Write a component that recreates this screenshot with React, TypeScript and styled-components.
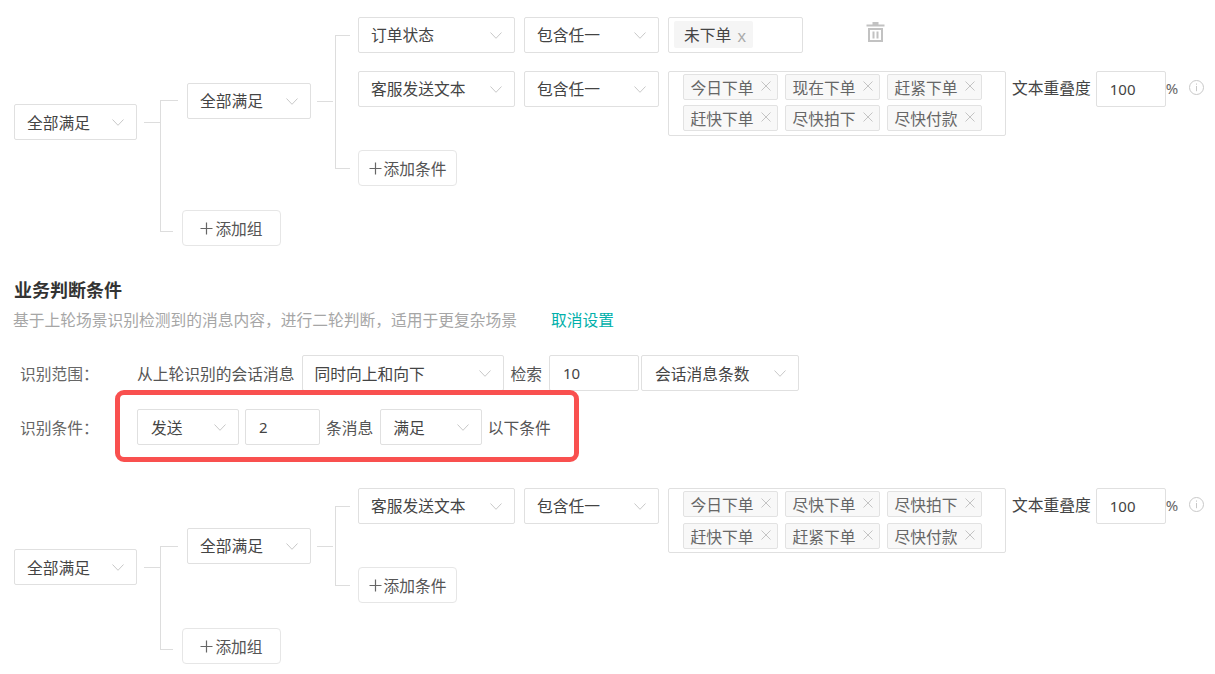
import React from "react";
import styled, { createGlobalStyle } from "styled-components";

const Global = createGlobalStyle`
  html, body { margin: 0; padding: 0; background: #fff; }
  body { font-family: "Noto Sans", "Noto Sans CJK SC", sans-serif; font-size: 15.75px; color: #444; overflow: hidden; }
  * { box-sizing: border-box; }
`;

const Page = styled.div`
  width: 1215px;
  height: 674px;
  padding: 17px 0 0 14px;
  position: relative;
`;
const Tree = styled.div`
  display: flex;
  align-items: stretch;
`;
const RootCell = styled.div<{ $top: number }>`
  display: flex;
  align-items: center;
  align-self: flex-start;
  margin-top: ${(p) => p.$top}px;
`;
const Stub = styled.div<{ $ml: number; $w: number }>`
  width: ${(p) => p.$w}px;
  height: 1px;
  margin-left: ${(p) => p.$ml}px;
  background: #ddd;
`;
const Bracket = styled.div<{ $mt: number; $mb: number; $ml?: number }>`
  display: flex;
  flex-direction: column;
  flex: none;
  width: 18px;
  margin: ${(p) => p.$mt}px 0 ${(p) => p.$mb}px ${(p) => p.$ml ?? 0}px;
`;
const BracketTop = styled.div<{ $w: number }>`
  flex: 1;
  width: ${(p) => p.$w}px;
  border-left: 1px solid #ddd;
  border-top: 1px solid #ddd;
`;
const BracketBottom = styled.div<{ $w: number }>`
  flex: 1;
  width: ${(p) => p.$w}px;
  border-left: 1px solid #ddd;
  border-bottom: 1px solid #ddd;
`;
const GroupColumn = styled.div`
  display: flex;
  flex-direction: column;
  align-items: flex-start;
  margin-left: 4px;
`;
const InnerGroup = styled.div`
  display: flex;
  align-items: stretch;
  margin-left: 5px;
`;
const FieldColumn = styled.div`
  display: flex;
  flex-direction: column;
  align-items: flex-start;
  margin-left: 5px;
`;
const FieldRow = styled.div<{ $mb?: number }>`
  display: flex;
  align-items: flex-start;
  gap: 9px;
  margin-bottom: ${(p) => p.$mb ?? 0}px;
`;
const SelectBox = styled.div<{ $w: number; $ml?: number; $pl?: number }>`
  width: ${(p) => p.$w}px;
  height: 36px;
  flex: none;
  display: flex;
  align-items: center;
  justify-content: space-between;
  padding: 0 12px 0 ${(p) => p.$pl ?? 12}px;
  margin-left: ${(p) => p.$ml ?? 0}px;
  border: 1px solid #e0e0e0;
  border-radius: 2px;
  background: #fff;
  color: #444;
  white-space: nowrap;
`;
const SelectText = styled.span<{ $dy?: number }>`
  margin-top: ${(p) => (p.$dy ?? 0) * 2}px;
`;
const Arrow = styled.svg`
  width: 12px;
  height: 7px;
  flex: none;
  color: #c8c8c8;
`;
const AddButton = styled.div<{ $mt?: number }>`
  width: 99px;
  height: 36px;
  margin-top: ${(p) => p.$mt ?? 0}px;
  display: flex;
  align-items: center;
  justify-content: center;
  gap: 2px;
  border: 1px solid #e6e6e6;
  border-radius: 4px;
  color: #555;
  white-space: nowrap;
  background: #fff;
`;
const PlusIcon = styled.svg`
  width: 13px;
  height: 13px;
  flex: none;
  color: #666;
`;
const ValueBox = styled.div<{ $w: number }>`
  width: ${(p) => p.$w}px;
  min-height: 36px;
  flex: none;
  border: 1px solid #e0e0e0;
  border-radius: 2px;
  background: #fff;
`;
const SingleValue = styled(ValueBox)`
  padding: 3px 5px;
`;
const TagValue = styled(ValueBox)<{ $rowGap: number }>`
  height: 65px;
  padding: 2px 14px 0;
  display: flex;
  flex-wrap: wrap;
  align-content: flex-start;
  column-gap: 7px;
  row-gap: ${(p) => p.$rowGap}px;
`;
const Tag = styled.div`
  height: 26px;
  width: 95px;
  padding: 0 6px 0 6.5px;
  display: flex;
  align-items: center;
  justify-content: space-between;
  border: 1px solid #e2e2e2;
  border-radius: 2px;
  background: #f8f8f8;
  color: #666;
  white-space: nowrap;
`;
const PlainTag = styled.div`
  height: 27px;
  width: 79px;
  padding: 0 7px 0 10px;
  display: flex;
  align-items: center;
  justify-content: space-between;
  border-radius: 2px;
  background: #f5f5f5;
  color: #444;
  white-space: nowrap;
`;
const PlainX = styled.span`
  font-family: "Liberation Sans", sans-serif;
  font-size: 17px;
  color: #aaa;
  margin-top: 5px;
`;
const Close = styled.svg`
  width: 10px;
  height: 10px;
  flex: none;
  color: #c4c4c4;
  margin-top: -3px;
`;
const TrashIcon = styled.svg`
  width: 19px;
  height: 20px;
  flex: none;
  margin: 5px 0 0 54px;
  color: #c2c2c2;
`;
const OverlapLabel = styled.span`
  margin-left: -3px;
  line-height: 34px;
  white-space: nowrap;
`;
const NumberBox = styled.div<{ $w: number; $ml?: number; $pl?: number }>`
  width: ${(p) => p.$w}px;
  height: 36px;
  flex: none;
  display: flex;
  align-items: center;
  padding-left: ${(p) => p.$pl ?? 13}px;
  margin-left: ${(p) => p.$ml ?? 0}px;
  border: 1px solid #e0e0e0;
  border-radius: 2px;
  color: #444;
  font-size: 15px;
`;
const Percent = styled.span`
  margin-left: -9px;
  line-height: 34px;
  font-size: 15px;
  color: #666;
`;
const InfoIcon = styled.svg`
  width: 15px;
  height: 15px;
  flex: none;
  margin: 9px 0 0 2px;
  color: #c8c8c8;
`;
const Title = styled.div`
  margin-top: 32px;
  height: 24px;
  line-height: 24px;
  font-size: 18px;
  font-weight: 700;
  color: #333;
`;
const Description = styled.div`
  margin: 6px 0 0 -1px;
  height: 24px;
  line-height: 24px;
  color: #a6a6a6;
  white-space: nowrap;
`;
const CancelLink = styled.span`
  margin-left: 34px;
  color: #00b0aa;
`;
const ConditionBlock = styled.div`
  margin-top: 23px;
  position: relative;
`;
const FormRow = styled.div<{ $mt?: number }>`
  display: flex;
  align-items: center;
  height: 36px;
  margin-top: ${(p) => p.$mt ?? 0}px;
  padding-left: 6px;
`;
const RowLabel = styled.span`
  width: 117px;
  flex: none;
  color: #666;
  white-space: nowrap;
`;
const InlineText = styled.span<{ $ml?: number; $mr?: number }>`
  margin-left: ${(p) => p.$ml ?? 0}px;
  margin-right: ${(p) => p.$mr ?? 0}px;
  color: #555;
  white-space: nowrap;
`;
const Highlight = styled.div`
  position: absolute;
  left: 101px;
  top: 35px;
  width: 464px;
  height: 72px;
  border: 5px solid #f9504f;
  border-radius: 9px;
  pointer-events: none;
`;
const LowerTree = styled(Tree)`
  margin-top: 43px;
`;

const Chevron = () => (
  <Arrow viewBox="0 0 12 7" fill="none">
    <path d="M0.5 0.5L6 6.300L11.500 0.500" stroke="currentColor" strokeWidth="1" />
  </Arrow>
);
const Select = ({
  w,
  ml,
  pl,
  dy,
  children,
}: {
  w: number;
  ml?: number;
  pl?: number;
  dy?: number;
  children: React.ReactNode;
}) => (
  <SelectBox $w={w} $ml={ml} $pl={pl}>
    <SelectText $dy={dy}>{children}</SelectText>
    <Chevron />
  </SelectBox>
);
const Add = ({ mt, children }: { mt?: number; children: React.ReactNode }) => (
  <AddButton $mt={mt}>
    <PlusIcon viewBox="0 0 13 13" fill="none">
      <path d="M6.5 0.5v12M0.5 6.5h12" stroke="currentColor" strokeWidth="1.2" />
    </PlusIcon>
    {children}
  </AddButton>
);
const TagItem = ({ children }: { children: React.ReactNode }) => (
  <Tag>
    {children}
    <Close viewBox="0 0 10 10" fill="none">
      <path d="M0.5 0.5l9 9M9.5 0.5l-9 9" stroke="currentColor" strokeWidth="1" />
    </Close>
  </Tag>
);
const Overlap = () => (
  <>
    <OverlapLabel>文本重叠度</OverlapLabel>
    <NumberBox $w={70} $ml={-4}>100</NumberBox>
    <Percent>%</Percent>
    <InfoIcon viewBox="0 0 15 15" fill="none">
      <circle cx="7.5" cy="7.5" r="7" stroke="currentColor" />
      <path d="M7.5 3.5v1.2M7.5 6v5.2" stroke="currentColor" />
    </InfoIcon>
  </>
);

function ConditionTree(props: {
  rootTop: number;
  groupTop: number;
  groupCenter: number;
  rootDy: number;
  groupDy: number;
  children: React.ReactNode;
  addMt: number;
  addMargin: number;
  As: typeof Tree;
}) {
  const { As } = props;
  return (
    <As>
      <RootCell $top={props.rootTop}>
        <Select w={123} dy={props.rootDy}>全部满足</Select>
        <Stub $ml={7} $w={16} />
      </RootCell>
      <Bracket $mt={props.groupCenter} $mb={14}>
        <BracketTop $w={18} />
        <BracketBottom $w={13} />
      </Bracket>
      <GroupColumn>
        <InnerGroup>
          <RootCell $top={props.groupTop}>
            <Select w={124} dy={props.groupDy}>全部满足</Select>
            <Stub $ml={6} $w={16} />
          </RootCell>
          <Bracket $mt={18} $mb={17} $ml={2}>
            <BracketTop $w={15} />
            <BracketBottom $w={15} />
          </Bracket>
          <FieldColumn>
            {props.children}
            <Add mt={props.addMt}>添加条件</Add>
          </FieldColumn>
        </InnerGroup>
        <Add mt={props.addMargin}>添加组</Add>
      </GroupColumn>
    </As>
  );
}

export default function App() {
  return (
    <Page>
      <Global />
      <ConditionTree As={Tree} rootTop={87} groupTop={66} groupCenter={83} rootDy={0.5} groupDy={-1} addMt={14} addMargin={24}>
        <FieldRow $mb={18}>
          <Select w={157} dy={-1}>订单状态</Select>
          <Select w={135} dy={-1}>包含任一</Select>
          <SingleValue $w={135}>
            <PlainTag>
              未下单
              <PlainX>x</PlainX>
            </PlainTag>
          </SingleValue>
          <TrashIcon viewBox="0 0 19 20" fill="currentColor">
            <path d="M6.5 0h6v2.5h6V4.500H.5V2.500h6z" />
            <path fillRule="evenodd" d="M2 6h15v14H2zM4 8v10h11V8zM6.500 9.500h2v7h-2zM10.500 9.500h2v7h-2z" />
          </TrashIcon>
        </FieldRow>
        <FieldRow>
          <Select w={157} dy={-1}>客服发送文本</Select>
          <Select w={135} dy={-1}>包含任一</Select>
          <TagValue $w={338} $rowGap={5}>
            {["今日下单", "现在下单", "赶紧下单", "赶快下单", "尽快拍下", "尽快付款"].map((t) => (
              <TagItem key={t}>{t}</TagItem>
            ))}
          </TagValue>
          <Overlap />
        </FieldRow>
      </ConditionTree>

      <Title>业务判断条件</Title>
      <Description>
        基于上轮场景识别检测到的消息内容，进行二轮判断，适用于更复杂场景
        <CancelLink>取消设置</CancelLink>
      </Description>

      <ConditionBlock>
        <FormRow>
          <RowLabel>识别范围：</RowLabel>
          <InlineText $mr={7}>从上轮识别的会话消息</InlineText>
          <Select w={202} pl={12}>同时向上和向下</Select>
          <InlineText $ml={7} $mr={7}>检索</InlineText>
          <NumberBox $w={90}>10</NumberBox>
          <Select w={158} ml={2} pl={13}>会话消息条数</Select>
        </FormRow>
        <FormRow $mt={18}>
          <RowLabel>识别条件：</RowLabel>
          <Select w={102} pl={13}>发送</Select>
          <NumberBox $w={75} $ml={6}>2</NumberBox>
          <InlineText $ml={6} $mr={7}>条消息</InlineText>
          <Select w={102} pl={12}>满足</Select>
          <InlineText $ml={5.5}>以下条件</InlineText>
        </FormRow>
        <Highlight />
      </ConditionBlock>

      <ConditionTree As={LowerTree} rootTop={61} groupTop={40} groupCenter={58} rootDy={0} groupDy={-1} addMt={14} addMargin={25}>
        <FieldRow>
          <Select w={157} dy={-1}>客服发送文本</Select>
          <Select w={135} dy={-1}>包含任一</Select>
          <TagValue $w={338} $rowGap={6}>
            {["今日下单", "尽快下单", "尽快拍下", "赶快下单", "赶紧下单", "尽快付款"].map((t) => (
              <TagItem key={t}>{t}</TagItem>
            ))}
          </TagValue>
          <Overlap />
        </FieldRow>
      </ConditionTree>
    </Page>
  );
}
